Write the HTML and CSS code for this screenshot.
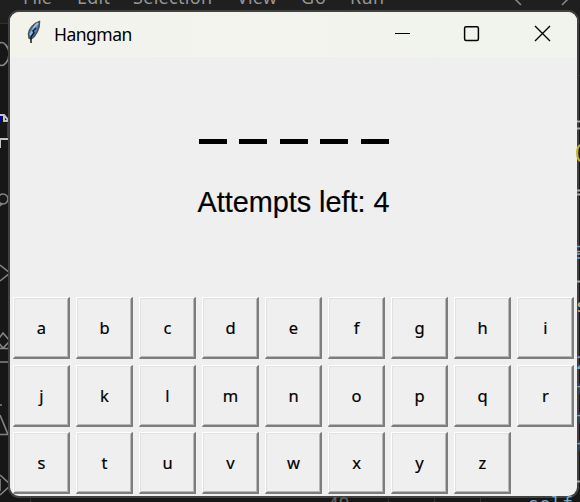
FILE: index.html
```
<!DOCTYPE html>
<html lang="en">
<head>
<meta charset="utf-8">
<title>Hangman</title>
<link rel="stylesheet" href="styles.css">
</head>
<body>
<svg class="editor" width="580" height="502" viewBox="0 0 580 502">
  <path d="M0 23.5H10M577 75.500H580M30.500 498V502M388.500 498V502M434.500 498V502M480.500 498V502" stroke="#303030"/>
  <g class="menu">
    <text x="23" y="4" textLength="29">File</text>
    <text x="77" y="4" textLength="33">Edit</text>
    <text x="133" y="4" textLength="79">Selection</text>
    <text x="237" y="4" textLength="40">View</text>
    <text x="301" y="4" textLength="25">Go</text>
    <text x="350" y="4" textLength="34">Run</text>
  </g>
  <g fill="none" stroke="#858585" stroke-width="1.6">
    <path d="M514-2L521 5M569-2L562 5"/>
    <path d="M0 43C4 41 9 47 9 54S4 67 0 65"/>
    <circle cx="3" cy="199" r="5"/><path d="M0 206L2 203"/>
    <path d="M0 265L10 273L0 281"/>
    <path d="M-3 341L3 333L10 341L3 348ZM0 348.500H9V362H0M0 405H2M0 415L8 434.500H0M0 475L11 485L0 495M0 479V491"/>
  </g>
  <path d="M0 115H4L9 121V139H0M4 115V121H9M0 140V148" fill="none" stroke="#c5c5c5" stroke-width="2"/>
  <path d="M0 116V122" stroke="#0000b0" stroke-width="3"/>
  <path d="M8 123V137" stroke="#207faa"/>
</svg>
<main class="window">
  <header class="titlebar">
    <svg class="feather" width="16" height="26" viewBox="0 0 16 26">
      <path d="M13.500 1.500C8 3 2.500 9 2.500 14L3 18L5 19C10 16 14 8 13.500 1.500Z" fill="#4e87c4" stroke="#504f4b" stroke-width="1.500"/>
      <path d="M12 3L9 6L6 12L4 15" fill="none" stroke="#8fbfee" stroke-width="1.800"/>
      <path d="M10 8L7 11L8 13L5 17L5 23" fill="none" stroke="#151b20" stroke-width="1.500"/>
    </svg>
    <h1 class="title">Hangman</h1>
    <svg class="controls" width="160" height="18" viewBox="0 0 160 18" fill="none" stroke="#000">
      <path d="M2 9.500H17"/>
      <rect x="71.600" y="2.700" width="13.800" height="13.800" rx="1.500" stroke-width="1.500"/>
      <path d="M142 2L157 17M157 2L142 17" stroke-width="1.400"/>
    </svg>
  </header>
  <section class="status">
    <div class="word"><span class="blank"></span><span class="blank"></span><span class="blank"></span><span class="blank"></span><span class="blank"></span></div>
    <p class="attempts">Attempts left: 4</p>
  </section>
  <section class="keys">
    <button>a</button><button>b</button><button>c</button><button>d</button><button>e</button><button>f</button><button>g</button><button>h</button><button>i</button>
    <button>j</button><button>k</button><button>l</button><button>m</button><button>n</button><button>o</button><button>p</button><button>q</button><button>r</button>
    <button>s</button><button>t</button><button>u</button><button>v</button><button>w</button><button>x</button><button>y</button><button>z</button>
  </section>
</main>
<svg class="editor" width="580" height="502" viewBox="0 0 580 502">
  <path d="M577 121.500H580M577 128.500H580M577 190.500H580M577 194.500H580M577 281.500H580M577 481.500H580" stroke="#aaa" stroke-width="2"/>
  <path d="M577 246.500H580M577 251.500H580M577 254H580M577 258H580" stroke="#70a9c8" stroke-width="1.500"/>
  <path d="M580 145C576 148 576 158 580 161" fill="none" stroke="#c9b51b" stroke-width="2"/>
  <g class="code">
    <text x="576" y="312" fill="#c8c090">s</text>
    <text x="576" y="369">2</text><text x="576" y="396">t</text>
    <text x="576" y="425">t</text><text x="576" y="453">t</text>
    <text x="528" y="510" textLength="45">self</text>
    <text x="328" y="510" fill="#626262">49</text>
  </g>
</svg>
</body>
</html>
```
FILE: styles.css
```
* { box-sizing: border-box; }
body {
  margin: 0;
  width: 580px;
  height: 502px;
  padding: 12px 3px 6px 10px;
  overflow: hidden;
  background: linear-gradient(#1f1f1f 0 23px, #171717 24px);
  font-family: "Noto Sans", sans-serif;
}
.editor { position: absolute; left: 0; top: 0; pointer-events: none; }
.menu { font-size: 18px; fill: #969696; }
.code { font: 18px "DejaVu Sans Mono", monospace; fill: #70a9c8; }
.window {
  position: relative;
  width: 567px;
  height: 484px;
  overflow: hidden;
  border-radius: 9px;
  background: #efefef;
  box-shadow: 0 0 0 2px #414141;
}
.titlebar {
  display: flex;
  align-items: center;
  height: 45px;
  padding-left: 16px;
  background: linear-gradient(90deg, #f3f3ec, #f0f4ed);
}
.feather { margin-top: -4px; }
.title {
  margin: -2px 0 0 12px;
  font-size: 17.5px;
  letter-spacing: -0.5px;
  font-weight: 400;
  line-height: 24px;
  color: #000;
}
.controls { margin: -3px 24px 0 auto; }
.status {
  display: flex;
  flex-direction: column;
  align-items: center;
  height: 237px;
  padding-top: 82px;
}
.word { display: flex; gap: 12.500px; }
.blank { width: 28px; height: 5px; background: #000; }
.attempts {
  margin: 41px 0 0;
  font: 28.800px/34px "Liberation Sans", sans-serif;
  white-space: nowrap;
  color: #000;
  -webkit-text-stroke: 0.200px #000;
}
.keys {
  display: grid;
  grid-template-columns: repeat(9, 57px);
  grid-auto-rows: 62px;
  gap: 5.500px 6px;
  padding: 3px 0 0 3px;
}
.keys button {
  padding: 1px 0 0 1px;
  border: solid;
  border-width: 1px 2px 2px 1px;
  border-color: #fff #7d7d7d #7d7d7d #fff;
  background: #efefef;
  box-shadow: inset 1px 1px #e1e1e1, inset -1px -1px #b8b8b8;
  font: 16.500px/24px "Noto Sans", sans-serif;
  color: #000;
  -webkit-text-stroke: 0.200px #000;
}
```
